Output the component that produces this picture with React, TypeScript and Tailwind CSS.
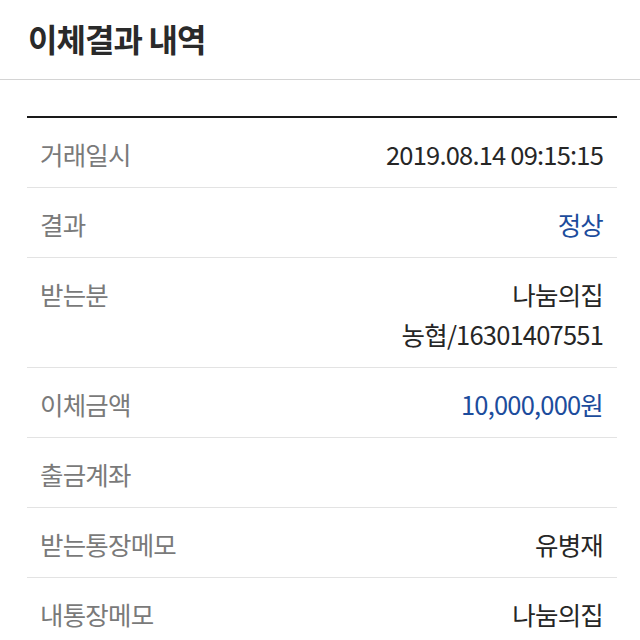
export default function App() {
  const rows: { label: string; values: string[]; blue?: boolean }[] = [
    { label: "거래일시", values: ["2019.08.14 09:15:15"] },
    { label: "결과", values: ["정상"], blue: true },
    { label: "받는분", values: ["나눔의집", "농협/16301407551"] },
    { label: "이체금액", values: ["10,000,000원"], blue: true },
    { label: "출금계좌", values: [] },
    { label: "받는통장메모", values: ["유병재"] },
    { label: "내통장메모", values: ["나눔의집"] },
  ];

  return (
    <main
      className="min-h-screen bg-white"
      style={{ fontFamily: '"Noto Sans CJK KR", "Noto Sans", sans-serif' }}
    >
      <header className="flex h-[80px] items-center border-b border-[#d4d4d4] px-[28px] pb-[3px]">
        <h1 className="text-[32px] font-bold tracking-[-0.9px] text-[#2a2a2a]">
          이체결과 내역
        </h1>
      </header>

      <section className="ml-[27px] mr-[23px] mt-[36px] border-t-2 border-[#1a1a1a]">
        {rows.map((row) => (
          <div
            key={row.label}
            className="flex justify-between border-b border-[#e3e3e3] pb-[13px] pl-[13px] pr-[14px] pt-[16px] text-[25.5px] leading-[40px] tracking-[-0.8px]"
          >
            <span className="text-[#7a7a7a]">{row.label}</span>
            <div className="flex flex-col items-end">
              {row.values.map((v) => (
                <span
                  key={v}
                  className={row.blue ? "text-[#1c4c9c]" : "text-[#262626]"}
                >
                  {v}
                </span>
              ))}
            </div>
          </div>
        ))}
      </section>
    </main>
  );
}
